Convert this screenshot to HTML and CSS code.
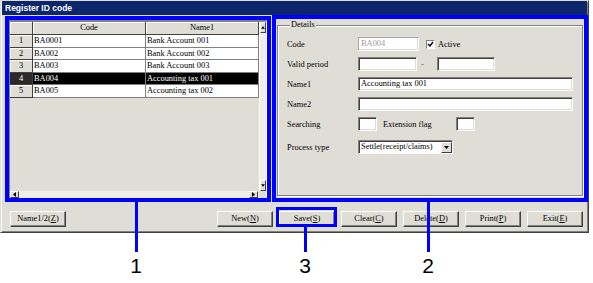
FILE: index.html
```html
<!DOCTYPE html>
<html lang="en">
<head>
    <meta charset="UTF-8">
    <title>Register ID code</title>
    <link rel="stylesheet" href="styles.css">
</head>
<body>

<div class="stage">
    <div class="window">
        <div class="titlebar">Register ID code</div>
        <div class="client">
            <div class="panes">
                <!-- list of codes -->
                <div class="grid">
                    <div class="sheet">
                        <div class="hcell"></div>
                        <div class="hcell">Code</div>
                        <div class="hcell">Name1</div>

                        <div class="rhead">1</div>
                        <div class="cell">BA0001</div>
                        <div class="cell">Bank Account 001</div>

                        <div class="rhead">2</div>
                        <div class="cell">BA002</div>
                        <div class="cell">Bank Account 002</div>

                        <div class="rhead">3</div>
                        <div class="cell">BA003</div>
                        <div class="cell">Bank Account 003</div>

                        <div class="rhead selected">4</div>
                        <div class="cell selected">BA004</div>
                        <div class="cell selected">Accounting tax 001</div>

                        <div class="rhead">5</div>
                        <div class="cell">BA005</div>
                        <div class="cell">Accounting tax 002</div>
                    </div>
                    <div class="vbar">
                        <span class="arrow"><svg width="5" height="3" viewBox="0 0 5 3"><path d="M2.5 0 L5 3 L0 3 Z" fill="#000"/></svg></span>
                        <span class="arrow"><svg width="5" height="3" viewBox="0 0 5 3"><path d="M0 0 L5 0 L2.5 3 Z" fill="#000"/></svg></span>
                    </div>
                    <div class="hbar">
                        <span class="arrow"><svg width="3" height="5" viewBox="0 0 3 5"><path d="M3 0 L3 5 L0 2.5 Z" fill="#000"/></svg></span>
                        <span class="arrow"><svg width="3" height="5" viewBox="0 0 3 5"><path d="M0 0 L3 2.5 L0 5 Z" fill="#000"/></svg></span>
                    </div>
                    <div class="corner"></div>
                </div>

                <!-- detail form -->
                <fieldset class="details">
                    <legend>Details</legend>
                    <div class="row">
                        <span class="label">Code</span>
                        <span class="field disabled w-code">BA004</span>
                        <span class="check"><svg width="7" height="7" viewBox="0 0 7 7"><path d="M1 3 L3 5 L6 1" stroke="#000" stroke-width="1.4" fill="none"/></svg></span>
                        <span class="check-label">Active</span>
                    </div>
                    <div class="row">
                        <span class="label">Valid period</span>
                        <span class="field w-date"></span>
                        <span class="dash">-</span>
                        <span class="field w-date2"></span>
                    </div>
                    <div class="row">
                        <span class="label">Name1</span>
                        <span class="field w-name">Accounting tax 001</span>
                    </div>
                    <div class="row">
                        <span class="label">Name2</span>
                        <span class="field w-name"></span>
                    </div>
                    <div class="row row-flags">
                        <span class="label">Searching</span>
                        <span class="field w-flag"></span>
                        <span class="label label-ext">Extension flag</span>
                        <span class="field w-flag"></span>
                    </div>
                    <div class="row">
                        <span class="label">Process type</span>
                        <span class="select">
                            <span class="select-text">Settle(receipt/claims)</span>
                            <span class="drop"><svg width="5" height="3" viewBox="0 0 5 3"><path d="M0 0 L5 0 L2.5 3 Z" fill="#000"/></svg></span>
                        </span>
                    </div>
                </fieldset>
            </div>

            <div class="buttons">
                <button class="btn btn-first">Name1/2(<u>Z</u>)</button>
                <button class="btn">New(<u>N</u>)</button>
                <button class="btn">Save(<u>S</u>)</button>
                <button class="btn">Clear(<u>C</u>)</button>
                <button class="btn">Delete(<u>D</u>)</button>
                <button class="btn">Print(<u>P</u>)</button>
                <button class="btn">Exit(<u>E</u>)</button>
            </div>
        </div>
    </div>

    <!-- callout marks drawn over the screenshot -->
    <div class="mark mark-list"></div>
    <div class="mark mark-details"></div>
    <div class="mark mark-save"></div>

    <div class="callout callout-1"><div class="stem"></div><span>1</span></div>
    <div class="callout callout-2"><div class="stem"></div><span>2</span></div>
    <div class="callout callout-3"><div class="stem"></div><span>3</span></div>
</div>

</body>
</html>
```

FILE: styles.css
```css
* {
    box-sizing: border-box;
}
body {
    margin: 0;
    background: #fff;
    font-family: "Liberation Serif", "DejaVu Serif", serif;
    font-size: 8.4px;
    color: #000;
}
.stage {
    position: relative;
    width: 593px;
    height: 283px;
}

/* window frame */
.window {
    width: 589px;
    height: 233px;
    background: #dfded6;
    border: 1px solid;
    border-color: #dfded6 #404040 #404040 #dfded6;
    box-shadow: inset 1px 1px 0 #fff, inset -1px -1px 0 #808080;
    display: flex;
    flex-direction: column;
}
.titlebar {
    height: 14px;
    margin: 0 1px;
    padding-left: 3px;
    background: #0c266c;
    color: #fff;
    font: bold 8.5px/14px "Liberation Sans", Arial, sans-serif;
}
.client {
    flex: 1;
    padding: 5px 5px 0 7px;
    display: flex;
    flex-direction: column;
}
.panes {
    display: flex;
    align-items: flex-start;
    gap: 10px;
}

/* grid */
.grid {
    width: 259px;
    height: 179px;
    border-style: solid;
    border-width: 2px 1px 1px 2px;
    border-color: #808080 #fff #fff #808080;
    display: grid;
    grid-template-columns: 1fr 7px;
    grid-template-rows: 1fr 7px;
    background: #dfded6;
}
.sheet {
    display: grid;
    grid-template-columns: 23px 113px 113px;
    grid-template-rows: 13px repeat(5, 12.5px);
    align-content: start;
}
.hcell, .rhead {
    background: #dfded6;
    border-right: 1px solid #404040;
    border-bottom: 1px solid #404040;
    box-shadow: inset 1px 1px 0 #fff;
    text-align: center;
    line-height: 12px;
}
.cell {
    background: #fff;
    border-right: 1px solid #808080;
    border-bottom: 1px solid #808080;
    padding-left: 1px;
    line-height: 12px;
    white-space: nowrap;
}
.cell.selected {
    background: #000;
    color: #fff;
}
.rhead.selected {
    background: #2a2a2a;
    color: #fff;
    box-shadow: none;
}
.vbar {
    display: flex;
    flex-direction: column;
    justify-content: space-between;
    background: #efeee9;
    border-left: 1px solid #fff;
}
.vbar .arrow {
    height: 11px;
}
.hbar {
    display: flex;
    justify-content: space-between;
    background: #efeee9;
    padding-right: 1px;
}
.hbar .arrow {
    width: 9px;
}
.arrow {
    display: flex;
    align-items: center;
    justify-content: center;
    background: #dfded6;
    border: 1px solid;
    border-color: #fff #404040 #404040 #fff;
}
.corner {
    background: #dfded6;
}

/* details */
.details {
    flex: 1;
    height: 176px;
    margin: 0;
    padding: 7px 0 0 9px;
    min-width: 0;
    border: 1px solid #808080;
    box-shadow: 1px 1px 0 #fff, inset 1px 1px 0 #fff;
}
.details legend {
    margin-left: 3px;
    padding: 0 1px;
    line-height: 10px;
    background: #dfded6;
}
.row {
    display: flex;
    align-items: center;
    height: 14px;
    margin-bottom: 6px;
}
.row-flags {
    margin-bottom: 9px;
}
.label {
    width: 71px;
}
.label-ext {
    width: 73px;
    margin-left: 6px;
}
.field {
    height: 14px;
    background: #fff;
    border: 1px solid;
    border-color: #808080 #fff #fff #808080;
    box-shadow: inset 1px 1px 0 #404040, inset -1px -1px 0 #dfded6;
    padding-left: 2px;
    line-height: 12px;
    white-space: nowrap;
}
.field.disabled {
    color: #9a9a9a;
    border-color: #a8a8a8 #fff #fff #a8a8a8;
    box-shadow: inset -1px -1px 0 #dfded6;
}
.w-code { width: 61px; }
.w-date { width: 59px; }
.w-date2 { width: 58px; }
.w-name { width: 215px; }
.w-flag { width: 19px; }
.dash {
    width: 20px;
    padding-left: 4px;
    color: #555;
}
.check {
    width: 9px;
    height: 9px;
    margin-left: 7px;
    margin-right: 3px;
    background: #fff;
    border: 1px solid;
    border-color: #808080 #fff #fff #808080;
    display: flex;
    align-items: center;
    justify-content: center;
}
.select {
    width: 95px;
    height: 14px;
    display: flex;
    background: #fff;
    border: 1px solid;
    border-color: #808080 #fff #fff #808080;
    box-shadow: inset 1px 1px 0 #404040;
}
.select-text {
    flex: 1;
    padding-left: 2px;
    line-height: 12px;
    white-space: nowrap;
}
.drop {
    width: 11px;
    margin: 1px 0 0;
    display: flex;
    align-items: center;
    justify-content: center;
    background: #dfded6;
    border: 1px solid;
    border-color: #fff #404040 #404040 #fff;
}

/* bottom buttons */
.buttons {
    display: flex;
    gap: 6px;
    margin-top: 12px;
    padding-left: 2px;
}
.btn {
    width: 56px;
    height: 16px;
    padding: 0;
    background: #dfded6;
    border: 1px solid;
    border-color: #fff #404040 #404040 #fff;
    box-shadow: inset -1px -1px 0 #808080;
    font-family: "Liberation Serif", "DejaVu Serif", serif;
    font-size: 8.4px;
    line-height: 14px;
    color: #000;
    text-align: center;
}
.btn-first {
    margin-right: auto;
}

/* callouts */
.mark {
    position: absolute;
    border: 4px solid #0000ff;
}
.mark-list {
    left: 5px;
    top: 16px;
    width: 266px;
    height: 186px;
}
.mark-details {
    left: 272px;
    top: 15px;
    width: 316px;
    height: 187px;
}
.mark-save {
    left: 276px;
    top: 207px;
    width: 61px;
    height: 20px;
    border-width: 3px;
}
.callout {
    position: absolute;
    width: 20px;
    display: flex;
    flex-direction: column;
    align-items: center;
    font: 21px/21px "Liberation Sans", Arial, sans-serif;
}
.callout .stem {
    width: 3px;
    background: #0000ff;
    margin-bottom: 3px;
}
.callout-1 { left: 126px; top: 202px; }
.callout-1 .stem { height: 50px; }
.callout-2 { left: 418px; top: 201px; }
.callout-2 .stem { height: 51px; }
.callout-3 { left: 295px; top: 227px; }
.callout-3 .stem { height: 25px; }
```
